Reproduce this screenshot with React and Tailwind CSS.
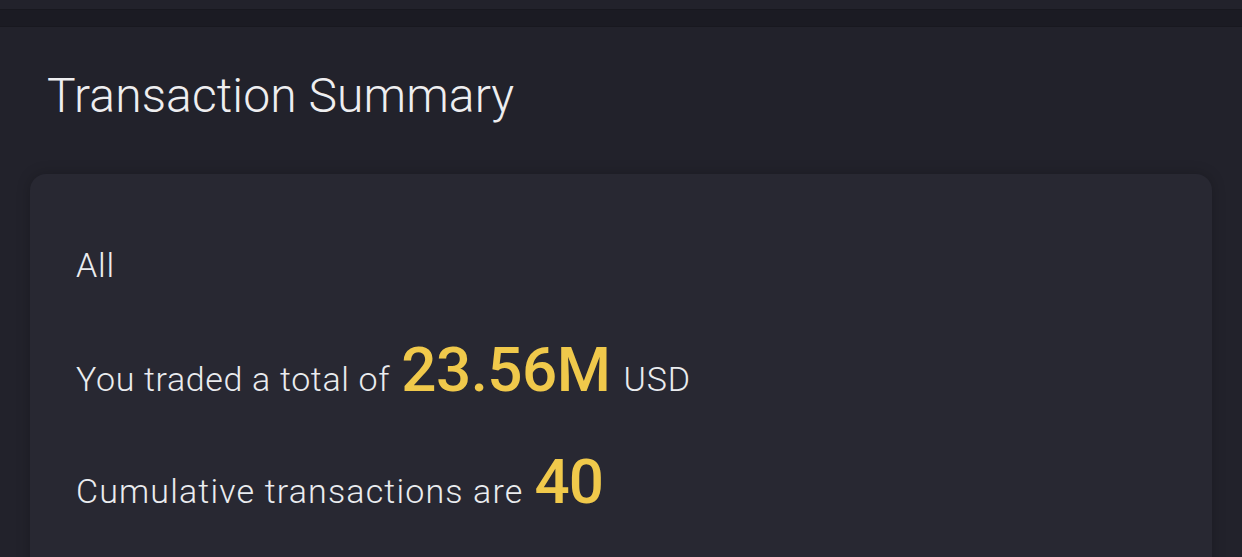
export default function App() {
  const font = { fontFamily: "Roboto, 'Noto Sans', sans-serif" };
  return (
    <div className="w-[1242px] h-[557px] overflow-hidden bg-[#22222b] text-[#eaecef]" style={font}>
      <div className="h-[9px] bg-[#22222b]" />
      <div className="h-[18px] bg-[#1b1b23] border-y border-[#18181f]" />
      <div className="h-[136px] pt-[45px] pl-[47px] bg-[#22222b]">
        <h1 className="text-[48px] leading-none font-light tracking-[0.1px] text-[#eeeef0]">Transaction Summary</h1>
      </div>
      <div className="mt-[11px] mx-[30px] h-[420px] rounded-[16px] bg-[#282832] shadow-[0_0_14px_rgba(0,0,0,0.22)] pl-[46px] pt-[74px]">
        <div className="text-[34px] leading-none font-light tracking-[0.8px]">All</div>
        <div className="mt-[57px] flex items-baseline">
          <span className="text-[34px] leading-none font-light tracking-[0.65px]">You traded a total of</span>
          <span className="ml-[11px] text-[62px] leading-none font-medium text-[#f0c94b] tracking-[-0.5px]">23.56M</span>
          <span className="ml-[13px] text-[34px] leading-none font-light tracking-[0.8px]">USD</span>
        </div>
        <div className="mt-[50px] flex items-baseline">
          <span className="text-[34px] leading-none font-light tracking-[1.15px]">Cumulative transactions are</span>
          <span className="ml-[11px] text-[62px] leading-none font-medium text-[#f0c94b] tracking-[-1px]">40</span>
        </div>
      </div>
    </div>
  );
}
